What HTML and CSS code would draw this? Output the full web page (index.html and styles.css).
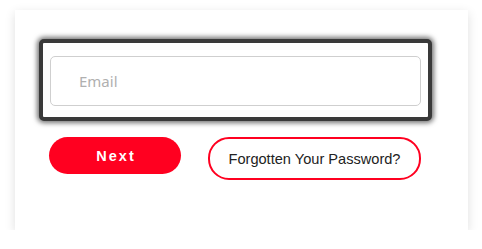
FILE: index.html
```html
<!DOCTYPE html>
<html lang="en">
<head>
    <meta charset="UTF-8">
    <meta name="viewport" content="width=device-width, initial-scale=1.0">
    <title>Sign in</title>
    <link rel="stylesheet" href="styles.css">
</head>
<body>
    <div class="card">
        <div class="field-focus">
            <input type="email" class="email-input" placeholder="Email">
        </div>

        <div class="actions">
            <button class="btn-next">Next</button>
            <button class="btn-forgot">Forgotten Your Password?</button>
        </div>
    </div>
</body>
</html>
```

FILE: styles.css
```css
body {
    margin: 0;
    background-color: #fff;
    font-family: "Liberation Sans", Arial, sans-serif;
}
.card {
    box-sizing: border-box;
    width: 453px;
    height: 220px;
    margin: 10px 0 0 15px;
    padding: 29px 0 0 24px;
    background-color: #fff;
    box-shadow: 0 3px 10px rgba(0,0,0,0.13);
}
.field-focus {
    box-sizing: border-box;
    width: 393px;
    height: 82px;
    padding: 13px 7px 0 7px;
    border: 4px solid #3a3a3a;
    border-radius: 5px;
    box-shadow: 0 0 5px 2px rgba(0,0,0,0.55);
    background-color: #fff;
}
.email-input {
    box-sizing: border-box;
    display: block;
    width: 371px;
    height: 50px;
    padding: 0 0 0 28px;
    border: 1px solid #cfcfcf;
    border-radius: 5px;
    font-family: "Noto Sans", sans-serif;
    font-size: 15px;
    color: #333;
    outline: none;
}
.email-input::placeholder {
    color: #b0b0b0;
}
.actions {
    display: flex;
    align-items: flex-start;
    gap: 27px;
    margin-top: 16px;
    padding-left: 10px;
}
button {
    cursor: pointer;
    font-family: "Liberation Sans", Arial, sans-serif;
}
.btn-next {
    width: 132px;
    height: 37px;
    border: none;
    border-radius: 19px;
    background-color: #ff0020;
    color: #fff;
    font-size: 14.5px;
    font-weight: bold;
    letter-spacing: 2px;
    padding: 0 0 0 2px;
}
.btn-forgot {
    width: 213px;
    height: 43px;
    border: 2px solid #ff0020;
    border-radius: 21px;
    background-color: #fff;
    color: #222;
    font-size: 14.6px;
    padding: 0;
}
```
